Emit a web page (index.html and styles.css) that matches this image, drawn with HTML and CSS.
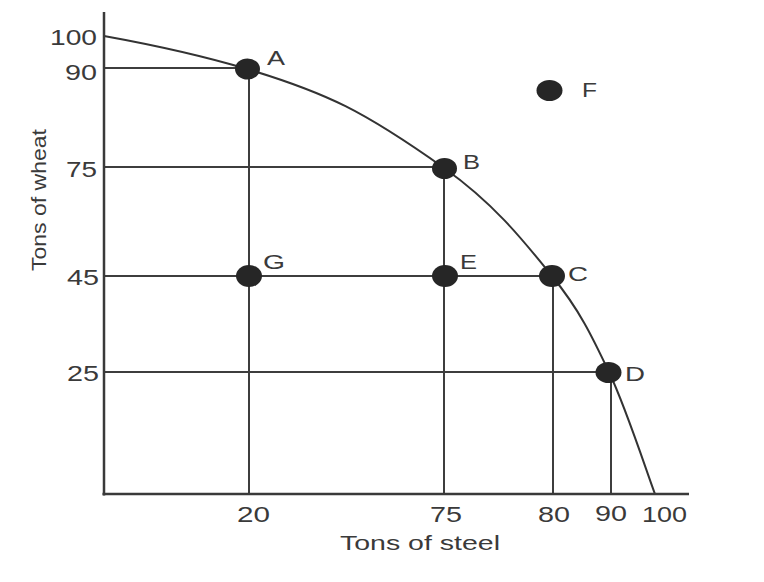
FILE: index.html
```html
<!DOCTYPE html>
<html>
<head>
<meta charset="utf-8">
<link rel="stylesheet" href="styles.css">
</head>
<body>
<svg class="chart" width="764" height="582" viewBox="0 0 764 582" xmlns="http://www.w3.org/2000/svg">
  <g class="guides">
    <line x1="104" y1="68" x2="247" y2="68"/>
    <line x1="104" y1="167" x2="444" y2="167"/>
    <line x1="104" y1="276" x2="552" y2="276"/>
    <line x1="104" y1="372" x2="609" y2="372"/>
    <line x1="249" y1="69" x2="249" y2="494"/>
    <line x1="444" y1="168" x2="444" y2="494"/>
    <line x1="553" y1="276" x2="553" y2="494"/>
    <line x1="611" y1="372" x2="611" y2="494"/>
  </g>
  <path class="curve" d="M104,36 C151,44.5 200,55 247,69 C327,93 364,111.2 444,168 C494.8,204 524.5,242 552,276 C579.5,310 591.8,335.7 609,372 C626.2,408.3 647.3,473.7 655,494"/>
  <g class="axes">
    <line x1="104" y1="12" x2="104" y2="495.5"/>
    <line x1="102.5" y1="494" x2="689" y2="494"/>
  </g>
  <g class="dots">
    <ellipse cx="247.5" cy="69" rx="12.5" ry="10.5"/>
    <ellipse cx="444.5" cy="168.5" rx="12.5" ry="10.5"/>
    <ellipse cx="549.5" cy="90.5" rx="13" ry="10.5"/>
    <ellipse cx="445" cy="276" rx="13" ry="11"/>
    <ellipse cx="552" cy="276" rx="13" ry="11"/>
    <ellipse cx="249" cy="276" rx="13" ry="11"/>
    <ellipse cx="608.5" cy="372.5" rx="13" ry="10.5"/>
  </g>
  <g class="ticks">
    <text x="50" y="45" textLength="47" lengthAdjust="spacingAndGlyphs">100</text>
    <text x="65" y="80" textLength="32" lengthAdjust="spacingAndGlyphs">90</text>
    <text x="66" y="177" textLength="31" lengthAdjust="spacingAndGlyphs">75</text>
    <text x="67" y="285" textLength="32" lengthAdjust="spacingAndGlyphs">45</text>
    <text x="67" y="381" textLength="32" lengthAdjust="spacingAndGlyphs">25</text>
    <text x="237" y="522" textLength="33" lengthAdjust="spacingAndGlyphs">20</text>
    <text x="430" y="522" textLength="32" lengthAdjust="spacingAndGlyphs">75</text>
    <text x="538" y="522" textLength="32" lengthAdjust="spacingAndGlyphs">80</text>
    <text x="595" y="521" textLength="32" lengthAdjust="spacingAndGlyphs">90</text>
    <text x="642" y="522" textLength="45" lengthAdjust="spacingAndGlyphs">100</text>
  </g>
  <g class="points">
    <text x="267" y="65" textLength="18" lengthAdjust="spacingAndGlyphs">A</text>
    <text x="463" y="169" textLength="17" lengthAdjust="spacingAndGlyphs">B</text>
    <text x="582" y="97" textLength="15" lengthAdjust="spacingAndGlyphs">F</text>
    <text x="460" y="269" textLength="17" lengthAdjust="spacingAndGlyphs">E</text>
    <text x="568" y="281" textLength="20" lengthAdjust="spacingAndGlyphs">C</text>
    <text x="263" y="269" textLength="22" lengthAdjust="spacingAndGlyphs">G</text>
    <text x="625" y="381" textLength="20" lengthAdjust="spacingAndGlyphs">D</text>
  </g>
  <text class="axis-title" x="340" y="550" textLength="160" lengthAdjust="spacingAndGlyphs">Tons of steel</text>
  <text class="axis-title" transform="translate(46 271) rotate(-90)" x="0" y="0" textLength="142" lengthAdjust="spacingAndGlyphs">Tons of wheat</text>
</svg>
</body>
</html>
```

FILE: styles.css
```css
html, body {
  margin: 0;
  padding: 0;
  background: #ffffff;
}

.chart {
  display: block;
  width: 764px;
  height: 582px;
  font-family: "Liberation Sans", Arial, sans-serif;
}

.guides line {
  stroke: #3d3d3d;
  stroke-width: 2;
}

.axes line {
  stroke: #3a3a3a;
  stroke-width: 2.5;
}

.curve {
  fill: none;
  stroke: #333333;
  stroke-width: 2;
}

.dots ellipse {
  fill: #262626;
}

.ticks text {
  font-size: 22px;
  fill: #3a3a3a;
}

.points text {
  font-size: 21px;
  fill: #3a3a3a;
}

.axis-title {
  font-size: 21px;
  fill: #3a3a3a;
}
```
